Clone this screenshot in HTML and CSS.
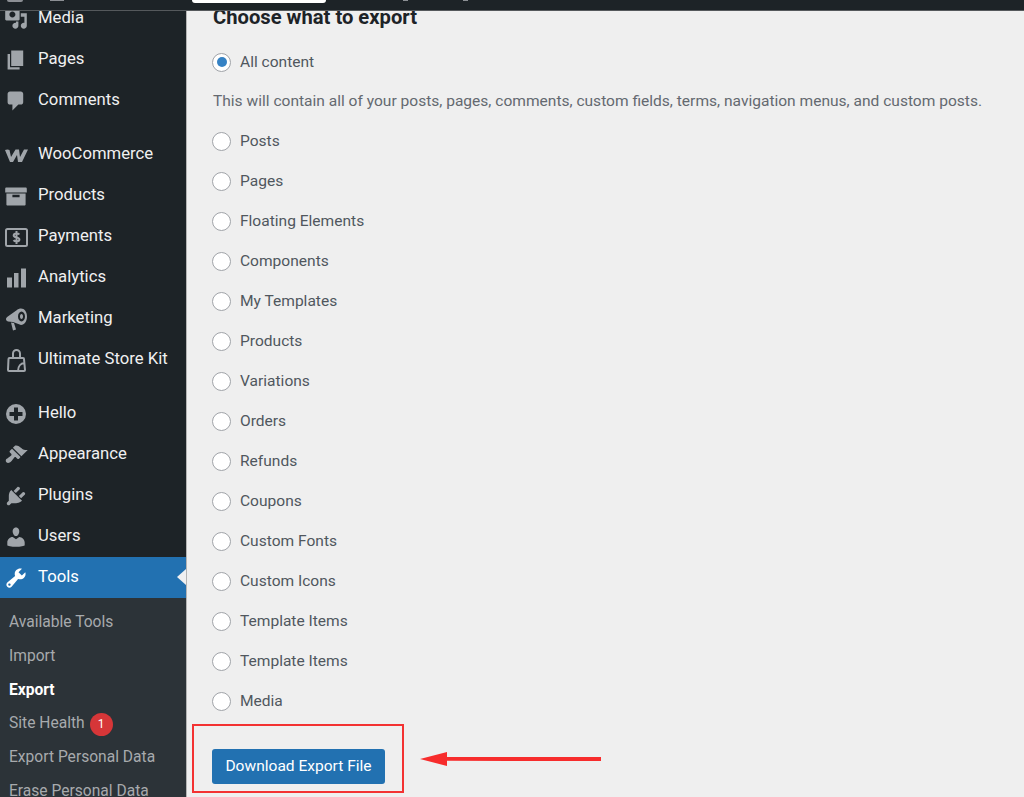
FILE: index.html
```html
<!DOCTYPE html>
<html lang="en">
<head>
<meta charset="utf-8">
<title>Export</title>
<link rel="stylesheet" href="styles.css">
</head>
<body>
<header class="topbar">
  <span class="top-logo"></span>
  <span class="top-home"></span>
  <span class="top-search"></span>
  <span class="top-fleck first-fleck"></span>
  <span class="top-fleck second-fleck"></span>
</header>
<div class="layout">
  <nav class="sidebar">
    <ul class="menu">
      <li class="item first">
        <svg class="icon" viewBox="0 0 20 20"><path d="M13 11V4c0-.55-.45-1-1-1h-1.670L9 1H5L3.670 3H2c-.55 0-1 .45-1 1v7c0 .55.45 1 1 1h10c.55 0 1-.45 1-1zM7 4.500c1.380 0 2.500 1.120 2.500 2.500S8.380 9.500 7 9.500 4.500 8.380 4.500 7 5.620 4.500 7 4.500zM14 6h5v10.500c0 1.380-1.120 2.500-2.500 2.500S14 17.880 14 16.500s1.120-2.500 2.500-2.500c.17 0 .34.02.5.05V9h-3V6zm-4 8.050V13h2v3.500c0 1.380-1.120 2.500-2.500 2.500S7 17.880 7 16.500 8.120 14 9.500 14c.17 0 .34.02.5.05z" fill-rule="evenodd"/></svg>
        <span>Media</span>
      </li>
      <li class="item">
        <svg class="icon" viewBox="0 0 20 20"><path d="M6 15V2h10v13H6zm-1 1h8v2H3V5h2v11z"/></svg>
        <span>Pages</span>
      </li>
      <li class="item">
        <svg class="icon" viewBox="0 0 20 20"><path d="M5 2h9c1.100 0 2 .9 2 2v7c0 1.100-.9 2-2 2h-2l-5 5v-5H5c-1.100 0-2-.9-2-2V4c0-1.100.9-2 2-2z"/></svg>
        <span>Comments</span>
      </li>
      <li class="sep"></li>
      <li class="item">
        <svg class="icon" viewBox="0 0 24 24"><path d="M1 7c1.500-.8 3.500-.8 4.500 0l1.500 7 4.500-7.500H15l1 7.500 4-7.500h4l-6 12.500h-4l-1-7-4 7H6z"/></svg>
        <span>WooCommerce</span>
      </li>
      <li class="item">
        <svg class="icon" viewBox="0 0 20 20"><path d="M19 4v3H1V4c0-.55.45-1 1-1h16c.55 0 1 .45 1 1zM2 8h16v9c0 .55-.45 1-1 1H3c-.55 0-1-.45-1-1V8zm11 3V9H7v2h6z" fill-rule="evenodd"/></svg>
        <span>Products</span>
      </li>
      <li class="item">
        <svg class="icon" viewBox="0 0 24 24"><rect class="outline" x="2" y="4" width="21" height="17" rx="1.500"/><path class="dollar" d="M15.300 9.500c-.5-.7-1.600-1-2.800-1-1.700 0-2.800.7-2.800 1.900 0 2.700 5.700 1.300 5.700 4 0 1.300-1.200 2-2.900 2-1.400 0-2.400-.4-3-1.200M12.500 6v13"/></svg>
        <span>Payments</span>
      </li>
      <li class="item">
        <svg class="icon" viewBox="0 0 24 24"><path d="M3 11.500h5v10H3zM10 7h4.500v14.500H10zM17 2.500h5v19h-5z"/></svg>
        <span>Analytics</span>
      </li>
      <li class="item">
        <svg class="icon" viewBox="0 0 24 24"><path d="M17 1.500C20.500 1.500 23 5 23 9.500S20.500 18 17 18L9 15l-5-.5C2.500 14 2 13 2 12s1-2 2.500-3L13 3c1-1 2.500-1.500 4-1.500zM17.500 4.500c-1.900 0-3.500 2.200-3.500 5s1.600 5 3.500 5 3.500-2.200 3.500-5-1.600-5-3.500-5zM17.500 7c.9 0 1.500 1.100 1.500 2.500S18.400 12 17.500 12 16 10.900 16 9.500 16.600 7 17.500 7z" fill-rule="evenodd"/><path d="M7 15.500l3 .5 2 6.500-3 1z"/></svg>
        <span>Marketing</span>
      </li>
      <li class="item">
        <svg class="icon" viewBox="0 0 24 24"><path class="outline" d="M5.500 10h13.500a1 1 0 0 1 1 1l1 11a1 1 0 0 1-1 1H5a1 1 0 0 1-1-1l.5-11a1 1 0 0 1 1-1zM9 10V5.500a3.500 3.500 0 0 1 7 0V10M21 15c-4 0-7 3-7 8"/></svg>
        <span>Ultimate Store Kit</span>
      </li>
      <li class="sep"></li>
      <li class="item">
        <svg class="icon" viewBox="0 0 24 24"><path d="M12 2a10 10 0 1 0 0 20 10 10 0 0 0 0-20zM10 5.500h4V10h4.500v4H14v4.500h-4V14H5.500v-4H10z" fill-rule="evenodd"/></svg>
        <span>Hello</span>
      </li>
      <li class="item">
        <svg class="icon" viewBox="0 0 20 20"><path d="M14.480 11.060L7.410 3.990l1.500-1.500c.5-.56 2.300-.47 3.510.32 1.210.8 1.430 1.280 2.910 2.100 1.180.64 2.450 1.260 4.450.85zm-.71.71L6.700 4.700 4.930 6.470c-.39.39-.39 1.020 0 1.410l1.060 1.060c.39.39.39 1.030 0 1.420-.6.6-1.430 1.110-2.210 1.690-.35.26-.7.53-1.010.84C1.430 13.230.99 14.960 2.010 16s2.750.59 4.080-.72c.31-.31.58-.66.84-1.010.58-.78 1.090-1.610 1.690-2.210.39-.39 1.030-.39 1.420 0l1.060 1.060c.39.39 1.020.39 1.410 0z"/></svg>
        <span>Appearance</span>
      </li>
      <li class="item">
        <svg class="icon" viewBox="0 0 20 20"><path d="M13.110 4.360L9.870 7.600 8 5.730l3.240-3.240c.35-.34 1.050-.2 1.560.32.52.51.66 1.210.31 1.550zm-8 1.770l.91-1.120 9.010 9.010-1.190.84c-.71.71-2.630 1.160-3.820 1.160H6.140L4.900 17.260c-.59.59-1.540.59-2.120 0-.59-.58-.59-1.530 0-2.120l1.240-1.240v-3.880c0-1.130.4-3.190 1.090-3.890zm7.260 3.970l3.240-3.240c.34-.35 1.040-.21 1.550.31.52.51.66 1.210.31 1.550l-3.240 3.250z"/></svg>
        <span>Plugins</span>
      </li>
      <li class="item">
        <svg class="icon" viewBox="0 0 20 20"><path d="M10 9.250c-2.270 0-2.730-3.440-2.730-3.440C7 4.020 7.820 2 9.970 2c2.160 0 2.980 2.020 2.710 3.810 0 0-.41 3.440-2.680 3.440zm0 2.570L12.720 10c2.390 0 4.520 2.330 4.520 4.530v2.490s-3.650 1.130-7.240 1.130c-3.650 0-7.240-1.130-7.240-1.130v-2.490c0-2.250 1.940-4.480 4.470-4.480z"/></svg>
        <span>Users</span>
      </li>
      <li class="item current">
        <svg class="icon" viewBox="0 0 20 20"><path d="M16.680 9.770c-1.340 1.340-3.300 1.670-4.950.99l-5.410 6.520c-.99.99-2.590.99-3.580 0s-.99-2.590 0-3.570l6.520-5.420c-.68-1.650-.35-3.610.99-4.950 1.280-1.280 3.120-1.620 4.720-1.060l-2.890 2.890 2.820 2.820 2.860-2.870c.53 1.580.18 3.390-1.080 4.650zM3.810 16.210c.4.39 1.040.39 1.430 0 .4-.4.4-1.040 0-1.430-.39-.4-1.030-.4-1.430 0-.39.39-.39 1.030 0 1.430z" fill-rule="evenodd"/></svg>
        <span>Tools</span>
      </li>
    </ul>
    <ul class="submenu">
      <li>Available Tools</li>
      <li>Import</li>
      <li class="active">Export</li>
      <li>Site Health <span class="badge">1</span></li>
      <li>Export Personal Data</li>
      <li>Erase Personal Data</li>
    </ul>
  </nav>
  <main class="content">
    <h2 class="heading">Choose what to export</h2>
    <label class="option"><input type="radio" name="content" checked><span>All content</span></label>
    <p class="description">This will contain all of your posts, pages, comments, custom fields, terms, navigation menus, and custom posts.</p>
    <label class="option"><input type="radio" name="content"><span>Posts</span></label>
    <label class="option"><input type="radio" name="content"><span>Pages</span></label>
    <label class="option"><input type="radio" name="content"><span>Floating Elements</span></label>
    <label class="option"><input type="radio" name="content"><span>Components</span></label>
    <label class="option"><input type="radio" name="content"><span>My Templates</span></label>
    <label class="option"><input type="radio" name="content"><span>Products</span></label>
    <label class="option"><input type="radio" name="content"><span>Variations</span></label>
    <label class="option"><input type="radio" name="content"><span>Orders</span></label>
    <label class="option"><input type="radio" name="content"><span>Refunds</span></label>
    <label class="option"><input type="radio" name="content"><span>Coupons</span></label>
    <label class="option"><input type="radio" name="content"><span>Custom Fonts</span></label>
    <label class="option"><input type="radio" name="content"><span>Custom Icons</span></label>
    <label class="option"><input type="radio" name="content"><span>Template Items</span></label>
    <label class="option"><input type="radio" name="content"><span>Template Items</span></label>
    <label class="option"><input type="radio" name="content"><span>Media</span></label>
    <div class="frame">
      <button class="download" type="button">Download Export File</button>
      <svg class="arrow" viewBox="0 0 182 18"><path d="M181 7v4L27 10.800V16L0 9 27 2v5z"/></svg>
    </div>
  </main>
</div>
</body>
</html>
```
FILE: styles.css
```css
* { box-sizing: border-box; }
html, body { height: 100%; }
body {
  margin: 0;
  height: 797px;
  overflow: hidden;
  background: #efefef;
  font-family: Roboto, "Liberation Sans", sans-serif;
  display: flex;
  flex-direction: column;
}
ul { list-style: none; margin: 0; padding: 0; }

.topbar {
  height: 11px;
  flex: none;
  background: #1d2327;
  border-bottom: 1px solid #55595c;
  display: flex;
  align-items: flex-start;
  position: relative;
  z-index: 1;
}
.top-logo {
  width: 16px;
  height: 2px;
  margin-left: 7px;
  background: #8c8f94;
  border-radius: 0 0 8px 8px;
}
.top-home {
  width: 14px;
  height: 1px;
  margin-left: 27px;
  background: #8c8f94;
}
.top-search {
  width: 134px;
  height: 3px;
  margin-left: 128px;
  background: #fff;
  border-radius: 0 0 3px 3px;
}
.top-fleck {
  width: 5px;
  height: 1px;
  background: #8c8f94;
}
.first-fleck { margin-left: 77px; }
.second-fleck { margin-left: 55px; }

.layout { flex: 1; display: flex; min-height: 0; }

.sidebar {
  width: 186px;
  flex: none;
  background: #1d2327;
  display: flex;
  flex-direction: column;
}
.menu { flex: none; }
.item {
  height: 41px;
  display: flex;
  align-items: center;
  gap: 10px;
  padding-left: 4px;
  color: #f0f0f1;
  font-size: 16.7px;
  line-height: 20px;
  position: relative;
}
.item span { margin-top: -2px; }
.item.first { height: 28px; align-items: flex-start; }
.item.first span { margin-top: 0; line-height: 14px; }
.item.first .icon { margin-top: -5px; }
.sep { height: 13px; }
.icon {
  width: 24px;
  height: 24px;
  flex: none;
  fill: #a0a5aa;
}
.outline { fill: none; stroke: #a0a5aa; stroke-width: 2; }
.dollar { fill: none; stroke: #a0a5aa; stroke-width: 2; }
.current { background: #2271b1; color: #fff; }
.current .icon { fill: #fff; }
.current::after {
  content: "";
  position: absolute;
  right: 0;
  top: 12px;
  border: 8px solid transparent;
  border-right-color: #f0f0f1;
  border-left-width: 0;
  border-right-width: 9px;
}

.submenu {
  flex: 1;
  background: #2c3338;
  padding-top: 7px;
  color: #a7aaad;
  font-size: 15.6px;
  line-height: 20px;
}
.submenu li {
  height: 33.8px;
  padding: 7px 0 0 9px;
  white-space: nowrap;
}
.submenu .active { color: #fff; font-weight: 700; }
.badge {
  display: inline-block;
  width: 23px;
  height: 23px;
  margin-left: 1px;
  border-radius: 50%;
  background: #d63638;
  color: #fff;
  font-size: 12px;
  line-height: 22px;
  text-align: center;
}

.content {
  flex: 1;
  min-width: 0;
  border-left: 1px solid #b4b4b4;
  padding-left: 26px;
  color: #50575e;
  font-size: 15.56px;
}
.heading {
  margin: 0 0 17px;
  height: 14px;
  line-height: 12px;
  font-size: 20.2px;
  font-weight: 700;
  color: #1d2327;
  white-space: nowrap;
}
.option {
  height: 40px;
  display: flex;
  align-items: center;
  gap: 9px;
  margin-left: -1px;
}
.option input {
  appearance: none;
  width: 19px;
  height: 19px;
  margin: 0;
  flex: none;
  background: #fff;
  border: 1px solid #a0a3a8;
  border-radius: 50%;
  display: grid;
  place-items: center;
}
.option input:checked::before {
  content: "";
  width: 10px;
  height: 10px;
  border-radius: 50%;
  background: #3582c4;
}
.description {
  margin: 0;
  height: 39px;
  line-height: 39px;
  color: #646970;
  white-space: nowrap;
}
.frame {
  position: relative;
  width: 212px;
  height: 69px;
  margin: 3px 0 0 -21px;
  padding: 23px 0 0 18px;
  border: 2px solid #f33232;
}
.download {
  display: block;
  width: 173px;
  height: 35px;
  padding: 0 0 2px;
  border: 0;
  border-radius: 3px;
  background: #2271b1;
  color: #fff;
  font: 15.56px Roboto, "Liberation Sans", sans-serif;
}
.arrow {
  position: absolute;
  left: 226px;
  top: 24px;
  width: 182px;
  height: 18px;
  fill: #f72c2c;
}
```
